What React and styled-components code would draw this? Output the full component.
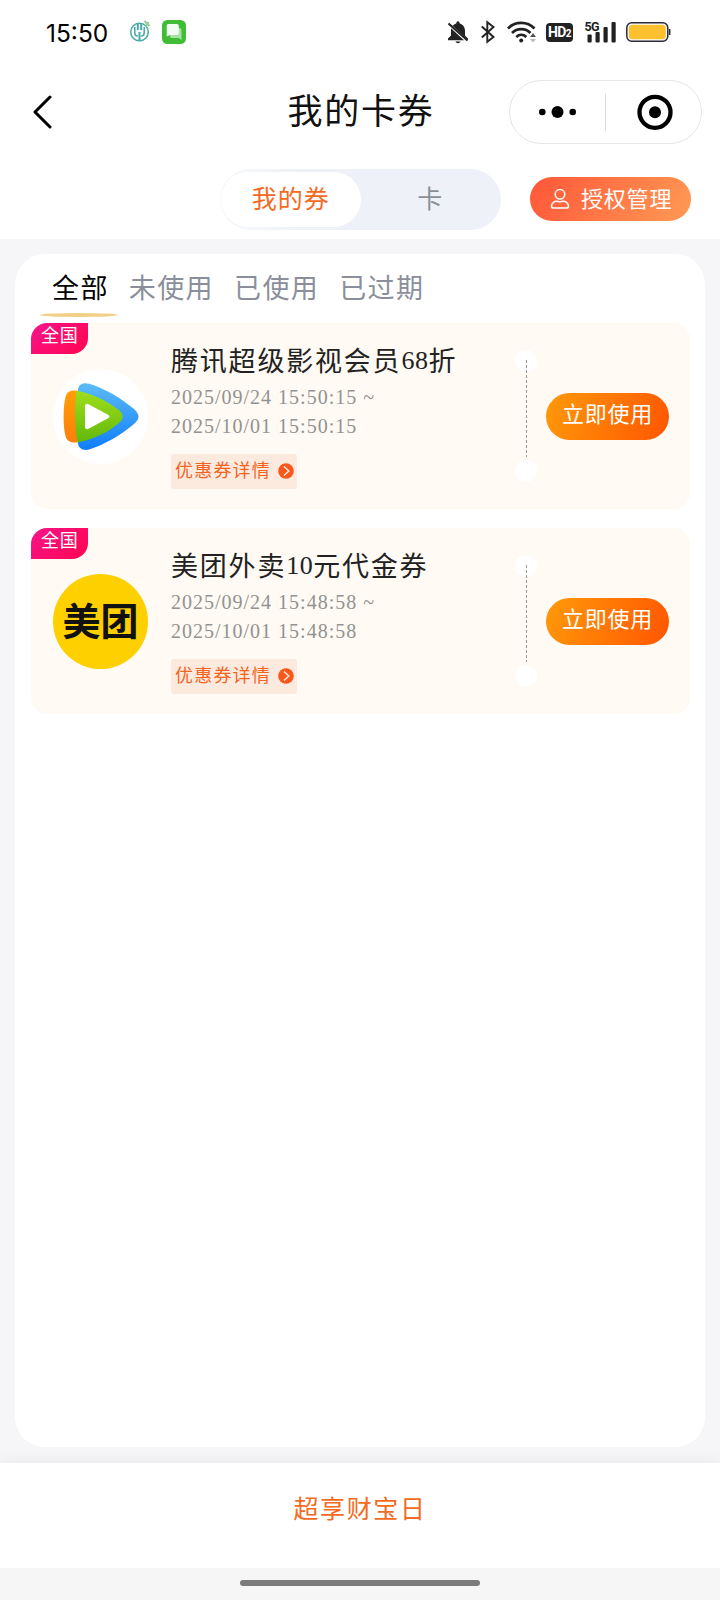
import styled, { createGlobalStyle } from "styled-components";

const GlobalStyle = createGlobalStyle`
  * {
    box-sizing: border-box;
  }

  body {
    margin: 0;
    background: #f6f6f9;
    font-family: "Liberation Serif", "Noto Sans CJK SC", sans-serif;
  }

  button {
    border: 0;
    padding: 0;
    background: none;
    font-family: inherit;
  }
`;

const coupons = [
  {
    id: 1,
    logo: "video",
    title: ["腾讯超级影视会员", "68", "折"],
    start: "2025/09/24 15:50:15 ~",
    end: "2025/10/01 15:50:15",
  },
  {
    id: 2,
    logo: "meituan",
    title: ["美团外卖", "10", "元代金券"],
    start: "2025/09/24 15:48:58 ~",
    end: "2025/10/01 15:48:58",
  },
];

const filters = ["全部", "未使用", "已使用", "已过期"];

export default function App() {
  return (
    <>
      <GlobalStyle />
      <Screen>
        <Header>
          <StatusBar />
          <NavBar>
            <BackIcon viewBox="0 0 20 34">
              <path d="M18 2 3 17l15 15" />
            </BackIcon>
            <PageTitle>我的卡券</PageTitle>
            <Capsule>
              <svg width="95" height="62" viewBox="0 0 95 62">
                <circle cx="32.3" cy="31" r="3.3" />
                <circle cx="47.5" cy="31" r="6" />
                <circle cx="62.7" cy="31" r="3.3" />
              </svg>
              <CapsuleLine />
              <svg width="95" height="62" viewBox="0 0 95 62">
                <circle cx="49" cy="31.3" r="15.5" fill="none" stroke="#000" strokeWidth="4.3" />
                <circle cx="49" cy="31.3" r="6" />
              </svg>
            </Capsule>
          </NavBar>
          <SwitchRow>
            <Switch>
              <SwitchItem $active>我的券</SwitchItem>
              <SwitchItem>卡</SwitchItem>
            </Switch>
            <AuthButton>
              <svg width="20" height="22" viewBox="0 0 20 22" fill="none" stroke="#fff" strokeWidth="1.5">
                <circle cx="10" cy="6.3" r="4.8" />
                <path d="M1.5 18.2c0-3.2 3-5 5.2-5 1.2 0 2 .6 3.3.6s2.1-.6 3.3-.6c2.2 0 5.2 1.8 5.2 5 0 1.3-.8 1.9-2 1.9h-13c-1.2 0-2-.6-2-1.900Z" />
              </svg>
              <span>授权管理</span>
            </AuthButton>
          </SwitchRow>
        </Header>

        <Panel>
          <Filters>
            {filters.map((name, i) => (
              <Filter key={name} $active={i === 0}>
                {name}
              </Filter>
            ))}
          </Filters>
          {coupons.map((coupon) => (
            <Coupon key={coupon.id} {...coupon} />
          ))}
        </Panel>

        <Footer>超享财宝日</Footer>
        <HomeArea>
          <HomeBar />
        </HomeArea>
      </Screen>
    </>
  );
}

function Coupon({ logo, title, start, end }) {
  return (
    <Card>
      <Tag>全国</Tag>
      {logo === "video" ? (
        <Logo $color="#fff">
          <VideoLogo />
        </Logo>
      ) : (
        <Logo $color="#ffd000">美团</Logo>
      )}
      <Info>
        <CouponTitle>
          {title[0]}
          <span>{title[1]}</span>
          {title[2]}
        </CouponTitle>
        <Dates>
          {start}
          <br />
          {end}
        </Dates>
        <Detail>
          优惠券详情
          <svg width="16" height="16" viewBox="0 0 16 16">
            <circle cx="8" cy="8" r="7.8" fill="#f8581c" />
            <path d="m6 3.5 4.8 4.5L6 12.5" fill="none" stroke="#fdeadf" strokeWidth="1.500" />
          </svg>
        </Detail>
      </Info>
      <Divider>
        <Hole />
        <Dashes />
        <Hole />
      </Divider>
      <UseButton>立即使用</UseButton>
    </Card>
  );
}

function VideoLogo() {
  return (
    <svg width="76" height="70" viewBox="0 0 76 70">
      <defs>
        <linearGradient id="blue" x1="0" y1="0" x2="0" y2="1">
          <stop offset="0" stopColor="#5cbcf6" />
          <stop offset="1" stopColor="#0f7dfa" />
        </linearGradient>
        <linearGradient id="orange" x1="0" y1="0" x2="0" y2="1">
          <stop offset="0" stopColor="#ff9f05" />
          <stop offset="1" stopColor="#ff7d0c" />
        </linearGradient>
        <linearGradient id="green" x1="0" y1="0" x2="0" y2="1">
          <stop offset="0" stopColor="#9fdf1c" />
          <stop offset="1" stopColor="#62b80c" />
        </linearGradient>
      </defs>
      <path
        d="M15 8C15 3 20 0 26 1.800 41 6 58 16 71 27c6 5.500 6 9.500 0 15C58 53 41 63 26 67.500 20 69 15 66 15 61Z"
        fill="url(#blue)"
      />
      <path
        d="M14.500 8.800C8 8 4 9.500 2.500 15c-2.500 9-2.500 30 0 39 1.500 5.500 5.500 7 12 6.500Z"
        fill="url(#orange)"
      />
      <path
        d="M13.500 8.800C28 11 44 19 56 28c5 4.500 5 8.500 0 13C44 51 29 58 14.500 60.500c-3-14-3-37.700-1-51.700Z"
        fill="url(#green)"
      />
      <path d="M22 25c0-3 1.500-3.800 4-2.600l19 10.300c2 1.200 2 2.400 0 3.600L26 46.600c-2.500 1.200-4 .4-4-2.600Z" fill="#fff" />
    </svg>
  );
}

function StatusBar() {
  return (
    <Status>
      <Clock>15:50</Clock>
      {/* bank app */}
      <StatusIcon $left={21} width="24" height="26" viewBox="0 0 24 26" fill="none" stroke="#45aaa6">
        <circle cx="10.500" cy="13" r="8.800" strokeWidth="1.500" />
        <path d="M8.800 4v7M12.200 4v7M10.500 13v8" strokeWidth="2" />
        <path d="M5.800 8v6c0 2 1.200 3 3 3.300M15.200 8v6c0 2-1.200 3-3 3.300" strokeWidth="1.500" />
        <path d="m15.500 2 5 5M19.500 3 17 7" stroke="#8ed08f" strokeWidth="2" />
      </StatusIcon>
      {/* messages */}
      <StatusIcon $left={9} width="24" height="26" viewBox="0 0 24 26">
        <rect y="1" width="24" height="24" rx="5.500" fill="#3fbd34" />
        <path d="M12 9h5c1.500 0 2.500.8 2.500 2.200V21l-2.700-2H10c-1.400 0-2-.8-2-2Z" fill="#a8e2a2" />
        <path d="M6.500 5h8.300c1.200 0 2 .7 2 2v7c0 1.200-.8 2-2 2H8l-3.300 1.600V7c0-1.300.6-2 1.800-2Z" fill="#f4fbf3" />
      </StatusIcon>

      <StatusIcon $left={262} width="20" height="24" viewBox="0 0 20 24">
        <path d="M8.300 3.500c0-3 3.400-3 3.400 0C15.500 4.700 17 7.500 17 11v4.500l3 3v1.700H0v-1.700l3-3V11c0-3.500 1.500-6.300 5.300-7.500ZM7.500 21.500h5c-.8 2.200-4.200 2.200-5 0Z" fill="#222" />
        <path d="M-1 2.500 20 22" stroke="#fff" strokeWidth="3" />
        <path d="M.5 3.500 19.500 20.500" stroke="#222" strokeWidth="2" />
      </StatusIcon>
      <StatusIcon $left={13} width="14" height="24" viewBox="0 0 14 24" fill="none" stroke="#222" strokeWidth="1.900">
        <path d="M.8 6.500 12.500 17 6.300 21.800V2.200L12.500 7 .8 17.500" />
      </StatusIcon>
      <StatusIcon $left={12} width="30" height="24" viewBox="0 0 30 24" fill="none" stroke="#222" strokeWidth="2.700">
        <path d="M1 8.500c7-7.500 19.500-7.500 26.500 0M5 13c5-5.200 13.500-5.200 18.500 0M9.300 17c3-2.800 7-2.800 10 0" />
        <circle cx="14.200" cy="20.500" r="2" fill="#222" stroke="none" />
        <path d="m23 17 3-4 3 4Z" fill="#555" stroke="none" />
        <path d="m23 19 3 3.500 3-3.500Z" fill="#bbb" stroke="none" />
      </StatusIcon>
      <HdBadge>
        HD<small>2</small>
      </HdBadge>
      <StatusIcon $left={12} width="31" height="24" viewBox="0 0 31 24" fill="#222">
        <text x="-.5" y="10.500" fontFamily="Roboto" fontSize="12.500" fontWeight="700" textLength="15">
          5G
        </text>
        <rect x="2.500" y="14.500" width="4.200" height="8" rx="1" />
        <rect x="10.500" y="12" width="4.200" height="10.500" rx="1" />
        <rect x="18.500" y="7" width="4.200" height="15.500" rx="1" />
        <rect x="26.500" y="2" width="4.200" height="20.500" rx="1" />
      </StatusIcon>
      <StatusIcon $left={10} width="45" height="24" viewBox="0 0 45 24">
        <rect x=".8" y="2.800" width="41" height="18.400" rx="5" fill="#fff" stroke="#292936" strokeWidth="1.500" />
        <rect x="2.800" y="4.800" width="37" height="14.400" rx="3.500" fill="#fdc02f" />
        <path d="M43.700 9v6" stroke="#292936" strokeWidth="1.500" />
      </StatusIcon>
    </Status>
  );
}

const Screen = styled.div`
  display: flex;
  flex-direction: column;
  width: 720px;
  height: 1600px;
  overflow: hidden;
`;

const Header = styled.header`
  height: 239px;
  background: #fff;
`;

const Status = styled.div`
  display: flex;
  align-items: center;
  height: 64px;
  padding-left: 46px;
`;

const Clock = styled.div`
  width: 62px;
  margin-top: 2px;
  font: 400 24.5px/28px Inter, sans-serif;
  white-space: nowrap;
`;

const StatusIcon = styled.svg`
  flex-shrink: 0;
  margin-left: ${({ $left }) => $left}px;
`;

const HdBadge = styled.div`
  display: flex;
  justify-content: center;
  align-items: baseline;
  width: 27px;
  height: 19px;
  margin: 1px 0 0 9px;
  border-radius: 4px;
  background: #222;
  color: #fff;
  font: 700 14px/19px Roboto, sans-serif;
  letter-spacing: -0.5px;

  small {
    font-size: 10px;
  }
`;

const NavBar = styled.div`
  display: grid;
  grid-template-columns: 1fr 160px 1fr;
  align-items: center;
  height: 96px;
  padding: 0 18px 0 32px;
`;

const BackIcon = styled.svg`
  width: 20px;
  height: 34px;
  fill: none;
  stroke: #000;
  stroke-width: 3;
  stroke-linecap: round;
  stroke-linejoin: round;
`;

const PageTitle = styled.h1`
  margin: 1px -8px 0 -20px;
  color: #111;
  font-size: 35px;
  font-weight: 400;
  line-height: 44px;
  letter-spacing: 1.8px;
  text-align: center;
  white-space: nowrap;
`;

const Capsule = styled.div`
  display: flex;
  align-items: center;
  justify-self: end;
  width: 193px;
  height: 64px;
  border: 1px solid #e6e6e6;
  border-radius: 32px;
`;

const CapsuleLine = styled.div`
  width: 1px;
  height: 37px;
  background: #dcdcdc;
`;

const SwitchRow = styled.div`
  display: flex;
  justify-content: flex-end;
  align-items: center;
  height: 78px;
  padding-right: 29px;
`;

const Switch = styled.div`
  display: flex;
  width: 281px;
  height: 61px;
  margin-right: 29px;
  padding: 3px 1px;
  border-radius: 31px;
  background: linear-gradient(90deg, #f6f8fb, #eef1f7 30%);
`;

const SwitchItem = styled.button`
  flex: 1;
  height: 55px;
  padding-bottom: 5px;
  border-radius: 28px;
  background: ${({ $active }) => ($active ? "#fff" : "transparent")};
  color: ${({ $active }) => ($active ? "#f36a22" : "#8b8f98")};
  font-size: 25px;
  letter-spacing: 1px;
`;

const AuthButton = styled.button`
  display: flex;
  align-items: center;
  gap: 11px;
  width: 161px;
  height: 44px;
  padding-left: 20px;
  border-radius: 22px;
  background: linear-gradient(120deg, #ff5638, #ff9a55);
  color: #fff;
  font-size: 22px;
  letter-spacing: 0.8px;
  white-space: nowrap;

  span {
    margin-top: -4px;
  }
`;

const Panel = styled.main`
  height: 1193px;
  margin: 15px 15px 16px;
  padding: 0 15px 0 16px;
  border-radius: 30px;
  background: #fff;
`;

const Filters = styled.div`
  display: flex;
  height: 69px;
  padding-left: 21px;
`;

const Filter = styled.button`
  position: relative;
  height: 64px;
  margin-right: 20px;
  color: ${({ $active }) => ($active ? "#000" : "#8b8f9b")};
  font-size: 27px;
  letter-spacing: 1.4px;
  white-space: nowrap;

  &::after {
    content: "";
    display: ${({ $active }) => ($active ? "block" : "none")};
    position: absolute;
    left: -12px;
    bottom: 1px;
    width: 78px;
    height: 4px;
    border-radius: 50%;
    background: #f2cf87;
  }
`;

const Card = styled.article`
  position: relative;
  display: flex;
  height: 186px;
  margin-bottom: 19px;
  padding-left: 22px;
  border-radius: 16px;
  background: #fffaf3;
`;

const Tag = styled.div`
  position: absolute;
  top: 0;
  left: 0;
  width: 57px;
  height: 31px;
  padding-left: 10px;
  border-radius: 16px 0;
  background: linear-gradient(135deg, #f8148a, #ff0550);
  color: #fff;
  font-size: 18px;
  line-height: 27px;
  letter-spacing: 0.8px;
`;

const Logo = styled.div`
  display: flex;
  justify-content: center;
  align-items: center;
  width: 95px;
  height: 95px;
  margin-top: 46px;
  border-radius: 50%;
  background: ${({ $color }) => $color};
  color: #111;
  font: 700 38px/40px "Noto Sans CJK SC", sans-serif;
  padding-bottom: ${({ $color }) => ($color === "#fff" ? 0 : "5px")};
  white-space: nowrap;
`;

const Info = styled.div`
  width: 344px;
  margin-left: 23px;
`;

const CouponTitle = styled.h2`
  margin: 21px 0 0;
  color: #222;
  font-size: 27px;
  font-weight: 400;
  line-height: 36px;
  letter-spacing: 1.8px;
  white-space: nowrap;

  span {
    position: relative;
    top: -2px;
    font-size: 26px;
    line-height: 1;
    letter-spacing: 0.5px;
  }
`;

const Dates = styled.div`
  margin-top: 3px;
  color: #929292;
  font-size: 20px;
  line-height: 29px;
  letter-spacing: 1px;
`;

const Detail = styled.div`
  display: flex;
  align-items: center;
  width: 126px;
  height: 35px;
  margin-top: 13px;
  padding: 0 0 5px 4px;
  border-radius: 3px;
  background: #fdeadf;
  color: #f4641f;
  font-size: 18px;
  letter-spacing: 1.2px;
  white-space: nowrap;

  svg {
    flex-shrink: 0;
    margin: 4px 0 0 7px;
  }
`;

const Divider = styled.div`
  display: flex;
  flex-direction: column;
  align-items: center;
  width: 22px;
  margin-top: 27px;
`;

const Hole = styled.div`
  width: 22px;
  height: 22px;
  border-radius: 50%;
  background: #fff;
`;

const Dashes = styled.div`
  z-index: 1;
  width: 1px;
  height: 97px;
  margin: -12px 0 3px;
  background: repeating-linear-gradient(#999 0 3px, transparent 3px 5px);
`;

const UseButton = styled.button`
  width: 123px;
  height: 47px;
  margin: 69.5px 0 0 9px;
  padding-bottom: 8px;
  border-radius: 24px;
  background: linear-gradient(110deg, #ff9a0a, #ff5500);
  color: #fff;
  font-size: 22px;
  letter-spacing: 0.8px;
`;

const Footer = styled.footer`
  height: 105px;
  background: #fff;
  box-shadow: 0 -2px 12px rgba(0, 0, 0, 0.06);
  color: #f36a22;
  font-size: 25px;
  line-height: 94px;
  letter-spacing: 1.6px;
  text-align: center;
`;

const HomeArea = styled.div`
  display: flex;
  justify-content: center;
  height: 32px;
  padding-top: 12px;
  background: #f6f6f6;
`;

const HomeBar = styled.div`
  width: 240px;
  height: 6px;
  border-radius: 3px;
  background: #7c7c7c;
`;
